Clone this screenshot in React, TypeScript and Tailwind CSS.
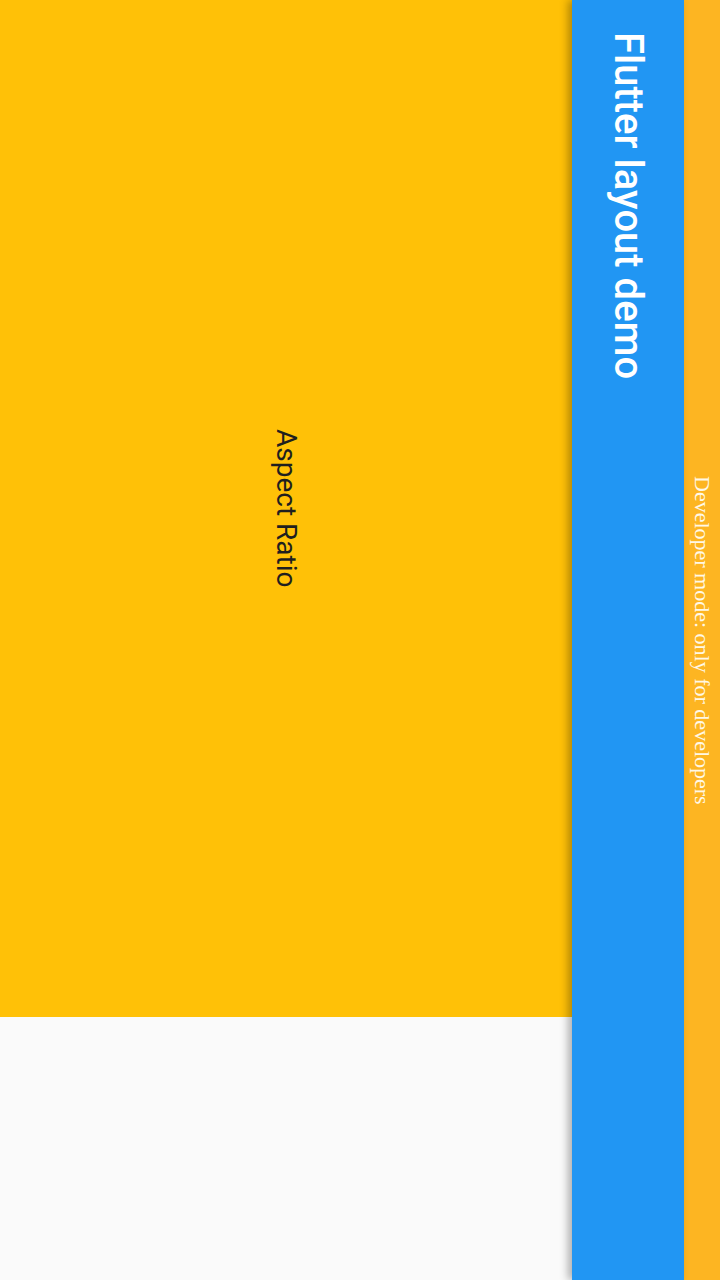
import React from "react";

export default function App() {
  return (
    <div className="flex w-[720px] h-[1280px] overflow-hidden">
      <div className="flex flex-col w-[572px] h-full bg-[#fafafa]">
        <div className="h-[1017px] bg-[#ffc107] flex items-center justify-center">
          <span
            className="[writing-mode:vertical-rl] text-[28px] leading-none text-[#1f1f1f]"
            style={{ fontFamily: "Roboto, sans-serif" }}
          >
            Aspect Ratio
          </span>
        </div>
      </div>
      <div className="relative w-[112px] h-full bg-[#2196f3] shadow-[-4px_0_8px_rgba(0,0,0,0.3)] flex justify-center pt-[32px]">
        <span
          className="[writing-mode:vertical-rl] text-[40px] font-medium leading-none text-white"
          style={{ fontFamily: "Roboto, sans-serif" }}
        >
          Flutter layout demo
        </span>
      </div>
      <div className="w-[36px] h-full bg-[#fdb522] flex items-center justify-center">
        <span
          className="[writing-mode:vertical-rl] text-[22px] leading-none text-[#fff8e6]"
          style={{ fontFamily: '"Liberation Serif", serif' }}
        >
          Developer mode: only for developers
        </span>
      </div>
    </div>
  );
}
